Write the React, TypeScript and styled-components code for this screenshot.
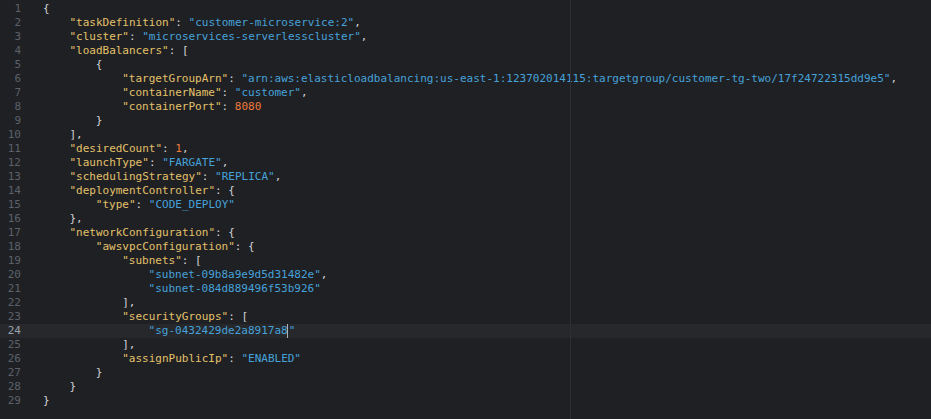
import React from "react";
import styled, { createGlobalStyle } from "styled-components";

const SOURCE = `{
    "taskDefinition": "customer-microservice:2",
    "cluster": "microservices-serverlesscluster",
    "loadBalancers": [
        {
            "targetGroupArn": "arn:aws:elasticloadbalancing:us-east-1:123702014115:targetgroup/customer-tg-two/17f24722315dd9e5",
            "containerName": "customer",
            "containerPort": 8080
        }
    ],
    "desiredCount": 1,
    "launchType": "FARGATE",
    "schedulingStrategy": "REPLICA",
    "deploymentController": {
        "type": "CODE_DEPLOY"
    },
    "networkConfiguration": {
        "awsvpcConfiguration": {
            "subnets": [
                "subnet-09b8a9e9d5d31482e",
                "subnet-084d889496f53b926"
            ],
            "securityGroups": [
                "sg-0432429de2a8917a8"
            ],
            "assignPublicIp": "ENABLED"
        }
    }
}`;

const ACTIVE_LINE = 24;
const CURSOR_COL = 21; // column after the indent, just before the closing quote

const CHAR_W = 6.6;

const GlobalStyle = createGlobalStyle`
  html, body {
    margin: 0;
    padding: 0;
    background: #1f2024;
  }
`;

const SEditor = styled.div`
  position: relative;
  width: 931px;
  height: 419px;
  overflow: hidden;
  background: #1f2024;
  padding-top: 2px;
  box-sizing: border-box;
  font-family: "DejaVu Sans Mono", "Liberation Mono", monospace;
  font-size: 11px;
`;

const SRuler = styled.div`
  position: absolute;
  top: 0;
  bottom: 0;
  left: 570px;
  width: 1px;
  background: #2e2f34;
`;

const SRow = styled.div<{ $active?: boolean }>`
  display: flex;
  height: 14px;
  line-height: 14px;
  background: ${(p) => (p.$active ? "#27282c" : "transparent")};
`;

const SGutter = styled.div<{ $active?: boolean }>`
  width: 21px;
  margin-right: 22px;
  text-align: right;
  color: ${(p) => (p.$active ? "#9aa1ab" : "#5c6068")};
  flex-shrink: 0;
`;

const SCode = styled.div`
  display: flex;
  white-space: pre;
  color: #cfd2d6;
`;

const SIndent = styled.span<{ $guide?: boolean }>`
  display: inline-block;
  width: ${CHAR_W * 4}px;
  height: 14px;
  background-image: ${(p) =>
    p.$guide
      ? "repeating-linear-gradient(to bottom, #404147 0 1px, transparent 1px 2px)"
      : "none"};
  background-size: 1px 100%;
  background-repeat: no-repeat;
  background-position: -1px 0;
`;

const SKey = styled.span`
  color: #e3c06a;
`;

const SString = styled.span`
  color: #46a2d9;
`;

const SNumber = styled.span`
  color: #ef7a3c;
`;

const SPunct = styled.span`
  color: #cfd2d6;
`;

const SCaret = styled.span`
  display: inline-block;
  width: 0;
  height: 14px;
  border-left: 1px solid #aeb2b8;
  margin-left: -1px;
  margin-right: 1px;
  vertical-align: top;
`;

type Token = { kind: "key" | "string" | "number" | "punct"; text: string };

const tokenize = (text: string): Token[] => {
  const out: Token[] = [];
  const re = /("[^"]*")(?=\s*:)|("[^"]*")|(-?\d+)|([^"\d]+)/g;
  let m: RegExpExecArray | null;
  while ((m = re.exec(text))) {
    if (m[1]) out.push({ kind: "key", text: m[1] });
    else if (m[2]) out.push({ kind: "string", text: m[2] });
    else if (m[3]) out.push({ kind: "number", text: m[3] });
    else out.push({ kind: "punct", text: m[4] });
  }
  return out;
};

const renderToken = (t: Token, key: React.Key) => {
  if (t.kind === "key") return <SKey key={key}>{t.text}</SKey>;
  if (t.kind === "string") return <SString key={key}>{t.text}</SString>;
  if (t.kind === "number") return <SNumber key={key}>{t.text}</SNumber>;
  return <SPunct key={key}>{t.text}</SPunct>;
};

const renderTokens = (tokens: Token[], cursor?: number) => {
  const out: React.ReactNode[] = [];
  let col = 0;
  tokens.forEach((t, i) => {
    const end = col + t.text.length;
    if (cursor !== undefined && cursor > col && cursor < end) {
      const cut = cursor - col;
      out.push(renderToken({ ...t, text: t.text.slice(0, cut) }, `${i}a`));
      out.push(<SCaret key="caret" />);
      out.push(renderToken({ ...t, text: t.text.slice(cut) }, `${i}b`));
    } else {
      out.push(renderToken(t, i));
    }
    col = end;
  });
  return out;
};

const App: React.FC = () => {
  const lines = SOURCE.split("\n");
  return (
    <>
      <GlobalStyle />
      <SEditor>
        {lines.map((line, i) => {
          const n = i + 1;
          const spaces = line.length - line.trimStart().length;
          const levels = Math.floor(spaces / 4);
          const active = n === ACTIVE_LINE;
          return (
            <SRow key={n} $active={active}>
              <SGutter $active={active}>{n}</SGutter>
              <SCode>
                {Array.from({ length: levels }, (_, l) => (
                  <SIndent key={l} $guide={l > 0} />
                ))}
                {renderTokens(tokenize(line.trimStart()), active ? CURSOR_COL : undefined)}
              </SCode>
            </SRow>
          );
        })}
        <SRuler />
      </SEditor>
    </>
  );
};

export default App;
